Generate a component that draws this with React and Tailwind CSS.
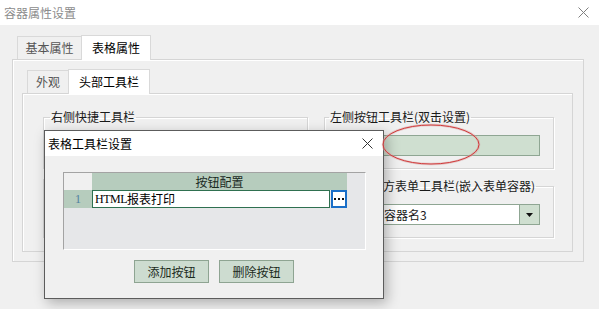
import React from 'react';

const CloseIcon = ({ color = '#808080' }) => (
  <svg width="11" height="11" viewBox="0 0 11 11" fill="none">
    <path d="M0.5 0.5 L10.5 10.5 M10.5 0.5 L0.5 10.5" stroke={color} strokeWidth="1" />
  </svg>
);

const GroupBox = ({ label, width, labelGap = '-ml-[9px]', children }) => (
  <fieldset className={`${width} h-[59px] border border-[#d5d5d5] shadow-[inset_1px_1px_0_#fff,1px_1px_0_#fff] px-[13px]`}>
    {label ? (
      <legend className={`${labelGap} px-[1px] leading-[14px] text-[#1a1a1a] whitespace-nowrap`}>{label}</legend>
    ) : null}
    {children}
  </fieldset>
);

const Tab = ({ label, width, active }) =>
  active ? (
    <div className={`${width} h-[25px] -mb-[1px] relative z-10 bg-white border border-b-0 border-[#d9d9d9] flex items-center justify-center text-black`}>
      {label}
    </div>
  ) : (
    <div className={`${width} h-[23px] border border-r-0 border-b-0 border-[#d9d9d9] flex items-center justify-center text-[#555]`}>
      {label}
    </div>
  );

const ToolbarDialog = () => (
  <div className="absolute left-[44px] top-[130px] w-[340px] h-[169px] bg-[#f0f0f0] border border-[#5c5c5c] shadow-[3px_4px_12px_rgba(0,0,0,0.28)] flex flex-col">
    <div className="h-[25px] bg-white flex items-center justify-between pl-[3px] pr-[10px] text-black">
      <span>表格工具栏设置</span>
      <CloseIcon color="#333" />
    </div>
    <div className="ml-[18px] mt-[16px] w-[303px] h-[78px] bg-[#e6e7e9] border-l border-t border-[#a3a3a3] border-r-white border-b-white border-r border-b flex flex-col">
      <div className="flex h-[17px]">
        <div className="w-[28px] bg-[#f0f0f0]" />
        <div className="w-[255px] bg-[#b6ccbd] flex items-center justify-center text-[#1a2a1f]">按钮配置</div>
      </div>
      <div className="flex h-[18px]">
        <div className="w-[28px] bg-[#b6ccbd] flex items-center justify-center text-[#4f7f9f] font-['Liberation_Serif',serif]">1</div>
        <div className="w-[238px] bg-white border border-[#2f7050] flex items-center pl-[2px] text-black">
          <span className="font-['Liberation_Serif',serif] tracking-[-0.5px]">HTML</span>
          <span>报表打印</span>
        </div>
        <div className="w-[16px] ml-[1px] bg-white border-2 border-[#1a6fc8] flex items-center justify-center">
          <svg width="10" height="2" viewBox="0 0 10 2">
            <rect x="0" y="0" width="2" height="2" fill="#111" />
            <rect x="4" y="0" width="2" height="2" fill="#111" />
            <rect x="8" y="0" width="2" height="2" fill="#111" />
          </svg>
        </div>
      </div>
    </div>
    <div className="mt-[10px] flex justify-center gap-[10px]">
      <button className="w-[75px] h-[23px] bg-[#cddcd0] border border-[#8ea492] text-[#1c2b1c]">添加按钮</button>
      <button className="w-[75px] h-[23px] bg-[#cddcd0] border border-[#8ea492] text-[#1c2b1c]">删除按钮</button>
    </div>
  </div>
);

export default function App() {
  return (
    <div className="relative w-[599px] h-[309px] overflow-hidden bg-[#f0f0f0] text-[12px] leading-[14px] font-['Noto_Sans_CJK_SC','Noto_Sans',sans-serif]">
      <div className="h-[25px] bg-white flex items-center justify-between pl-[4px] pr-[10px] text-[#8c8c8c]">
        <span>容器属性设置</span>
        <CloseIcon />
      </div>

      <div className="pl-[12px] pt-[11px]">
        <div className="flex items-end h-[23px] pl-[5px]">
          <Tab label="基本属性" width="w-[64px]" />
          <Tab label="表格属性" width="w-[70px]" active />
        </div>

        <div className="w-[572px] h-[203px] border border-[#d5d5d5] shadow-[inset_1px_1px_0_#fff] pl-[9px] pt-[9px]">
          <div className="flex items-end h-[24px] pl-[5px]">
            <Tab label="外观" width="w-[41px]" />
            <Tab label="头部工具栏" width="w-[82px]" active />
          </div>

          <div className="w-[551px] h-[159px] border border-[#d5d5d5] shadow-[inset_1px_1px_0_#fff] pl-[20px] pt-[16px] flex gap-[16px]">
            <div className="flex flex-col gap-[10px]">
              <GroupBox label="右侧快捷工具栏" width="w-[265px]" labelGap="-ml-[7px]" />
              <GroupBox width="w-[265px]" />
            </div>
            <div className="flex flex-col gap-[10px]">
              <GroupBox label="左侧按钮工具栏(双击设置)" width="w-[230px]">
                <div className="mt-[11px] h-[21px] bg-[#cfdfd0] border border-[#8fa693]" />
              </GroupBox>
              <GroupBox label="方表单工具栏(嵌入表单容器)" width="w-[230px]" labelGap="ml-[44px]">
                <div className="mt-[11px] h-[21px] bg-white border border-[#8fa693] flex">
                  <div className="flex-1 flex items-center pl-[45px] text-[#1a1a1a]">容器名3</div>
                  <div className="w-[20px] bg-[#cfdfd0] border-l border-[#8fa693] flex items-center justify-center">
                    <svg width="7" height="4" viewBox="0 0 7 4">
                      <path d="M0 0 H7 L3.5 4 Z" fill="#111" />
                    </svg>
                  </div>
                </div>
              </GroupBox>
            </div>
          </div>
        </div>
      </div>

      <ToolbarDialog />

      <svg className="absolute left-[380px] top-[122px]" width="104" height="46" viewBox="0 0 104 46">
        <ellipse cx="51" cy="22.5" rx="48" ry="19.5" fill="none" stroke="#d9a0a0" strokeWidth="2.5" opacity="0.5" />
        <ellipse cx="51" cy="22.5" rx="48" ry="19.5" fill="none" stroke="#d03a3a" strokeWidth="1" />
      </svg>
    </div>
  );
}
